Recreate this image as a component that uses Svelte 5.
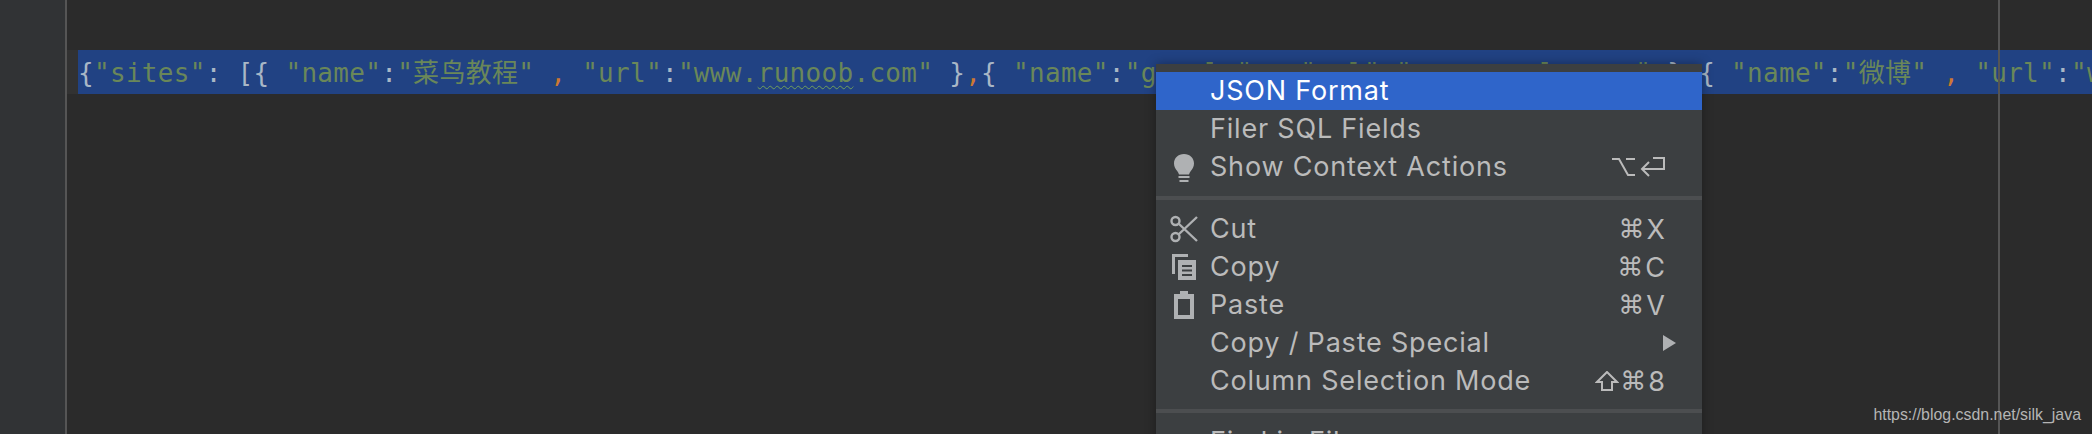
<script>
  const items = [
    { label: "JSON Format", active: true },
    { label: "Filer SQL Fields" },
    { label: "Show Context Actions", icon: "bulb", keys: ["opt", "ret"] },
    { sep: true },
    { label: "Cut", icon: "cut", keys: ["⌘", "X"] },
    { label: "Copy", icon: "copy", keys: ["⌘", "C"] },
    { label: "Paste", icon: "paste", keys: ["⌘", "V"] },
    { label: "Copy / Paste Special", arrow: true },
    { label: "Column Selection Mode", keys: ["shift", "⌘", "8"] },
    { sep: true, tight: true },
    { label: "Find in Files..." },
  ];
</script>

<div class="ide">
  <div class="gutter"></div>
  <div class="editor">
    <div class="line">
      <div class="caret-cell"></div>
      <pre class="code"><span class="p">&#123;</span><span class="s">"sites"</span><span class="p">: [&#123; </span><span class="s">"name"</span><span class="p">:</span><span class="s">"菜鸟教程"</span> <span class="c">,</span> <span class="s">"url"</span><span class="p">:</span><span class="s">"www.<span class="typo">runoob</span>.com"</span><span class="p"> &#125;</span><span class="c">,</span><span class="p">&#123; </span><span class="s">"name"</span><span class="p">:</span><span class="s">"google"</span> <span class="c">,</span> <span class="s">"url"</span><span class="p">:</span><span class="s">"www.google.com"</span><span class="p"> &#125;</span><span class="c">,</span><span class="p">&#123; </span><span class="s">"name"</span><span class="p">:</span><span class="s">"微博"</span> <span class="c">,</span> <span class="s">"url"</span><span class="p">:</span><span class="s">"www.weibo.com"</span><span class="p"> &#125;]&#125;</span></pre>
    </div>
  </div>

  <div class="margin-line"></div>

  <div class="menu">
    {#each items as item}
      {#if item.sep}
        <div class="sep" class:tight={item.tight}></div>
      {:else}
        <div class="row" class:active={item.active}>
          <span class="icon">
            {#if item.icon === "bulb"}
              <svg width="28" height="30" viewBox="0 0 28 30" fill="#afb1b3">
                <path d="M14 1c-5.800 0-10 4-10 9.500 0 3.500 1.600 5.500 3.200 7.500.9 1.200 1.500 2.300 1.800 3.500h10c.3-1.200.9-2.300 1.800-3.500 1.600-2 3.200-4 3.200-7.500C24 5 19.800 1 14 1z" />
                <rect x="8.500" y="23" width="11" height="2" />
                <rect x="9.500" y="27" width="9" height="2" />
              </svg>
            {:else if item.icon === "cut"}
              <svg width="28" height="28" viewBox="0 0 28 28" fill="none" stroke="#afb1b3" stroke-width="2.400">
                <circle cx="5.500" cy="6" r="4" />
                <circle cx="5.500" cy="22" r="4" />
                <path d="M8.500 8.500 27 26M8.500 19.500 27 2" />
              </svg>
            {:else if item.icon === "copy"}
              <svg width="28" height="28" viewBox="0 0 28 28" fill="#afb1b3">
                <path d="M2 1h16v3H5v17H2z" />
                <path fill-rule="evenodd" d="M8 7h18v20H8zM12 12v2h10v-2zm0 4.500v2h10v-2zm0 4.500v2h10v-2z" />
              </svg>
            {:else if item.icon === "paste"}
              <svg width="28" height="28" viewBox="0 0 28 28" fill="#afb1b3">
                <path fill-rule="evenodd" d="M4 3h6V0h8v3h6v25H4zM8 8v16h12V8z" />
              </svg>
            {/if}
          </span>
          <span class="label">{item.label}</span>
          {#if item.keys}
            <span class="keys">
              {#each item.keys as key}
                {#if key === "opt"}
                  <svg width="24" height="20" viewBox="0 0 24 20" fill="none" stroke="#bbbbbb" stroke-width="2">
                    <path d="M0 2h7l9 16h7M14 2h9" />
                  </svg>
                {:else if key === "ret"}
                  <svg class="ret" width="25" height="20" viewBox="0 0 25 20" fill="none" stroke="#bbbbbb" stroke-width="2">
                    <path d="M13 1h11v11H2M9 5 2 12l7 7" />
                  </svg>
                {:else if key === "shift"}
                  <svg class="shift" width="24" height="20" viewBox="0 0 24 20" fill="none" stroke="#bbbbbb" stroke-width="2">
                    <path d="M12 1 2 11h5v8h10v-8h5z" />
                  </svg>
                {:else if key === "⌘"}
                  <span class="cmd">⌘</span>
                {:else}
                  <span>{key}</span>
                {/if}
              {/each}
            </span>
          {/if}
          {#if item.arrow}<span class="arrow"></span>{/if}
        </div>
      {/if}
    {/each}
  </div>

  <div class="watermark">https://blog.csdn.net/silk_java</div>
</div>

<style>
  :global(body) {
    margin: 0;
    background: #2b2b2b;
  }
  .ide {
    position: relative;
    display: flex;
    width: 2092px;
    height: 434px;
    overflow: hidden;
    background: #2b2b2b;
  }
  .gutter {
    width: 65px;
    flex: none;
    background: #313335;
    border-right: 2px solid #555555;
  }
  .editor {
    flex: 1;
    min-width: 0;
    padding-top: 50px;
  }
  .line {
    display: flex;
    height: 44px;
  }
  .caret-cell {
    width: 11px;
    flex: none;
    background: #323232;
  }
  .code {
    flex: 1;
    margin: 0;
    overflow: hidden;
    background: #214283;
    font-family: "DejaVu Sans Mono", "Noto Sans CJK SC", monospace;
    font-size: 26px;
    line-height: 46px;
    letter-spacing: 0.3px;
    white-space: pre;
  }
  .p {
    color: #a9b7c6;
  }
  .s {
    color: #6a8759;
  }
  .c {
    color: #cc7832;
  }
  .typo {
    text-decoration: underline wavy #6f9e5c 1px;
    text-underline-offset: 3px;
  }
  .margin-line {
    position: absolute;
    left: 1998px;
    top: 0;
    bottom: 0;
    width: 2px;
    background: #555555;
  }
  .menu {
    position: absolute;
    left: 1156px;
    top: 64px;
    width: 546px;
    height: 380px;
    padding: 8px 0;
    background: #3c3f41;
    box-shadow: 0 0 10px rgba(0, 0, 0, 0.35);
    font-family: Inter, "Noto Sans", sans-serif;
    font-size: 27px;
    letter-spacing: 0.8px;
    color: #bbbbbb;
  }
  .row {
    display: flex;
    align-items: center;
    height: 38px;
    padding: 0 26px 0 14px;
  }
  .row.active {
    background: #2f65ca;
    color: #ffffff;
  }
  .icon {
    display: flex;
    justify-content: center;
    width: 28px;
    height: 28px;
    margin-right: 12px;
    flex: none;
  }
  .label {
    flex: 1;
    padding-bottom: 2px;
    white-space: nowrap;
  }
  .keys {
    display: flex;
    align-items: center;
    margin-right: 11px;
    letter-spacing: 0;
  }
  .cmd {
    font-family: "DejaVu Sans", sans-serif;
    font-size: 26px;
    margin-right: 2px;
  }
  .ret {
    margin-left: 4px;
  }
  .shift {
    margin-right: 1px;
  }
  .arrow {
    width: 0;
    height: 0;
    border-left: 13px solid #afb1b3;
    border-top: 8px solid transparent;
    border-bottom: 8px solid transparent;
  }
  .sep {
    height: 4px;
    margin: 10px 0;
    background: #4c4e50;
  }
  .sep.tight {
    margin-top: 9px;
  }
  .watermark {
    position: absolute;
    right: 11px;
    bottom: 10px;
    font-family: "Liberation Sans", sans-serif;
    font-size: 15.900px;
    color: #b5b5b5;
  }
</style>
